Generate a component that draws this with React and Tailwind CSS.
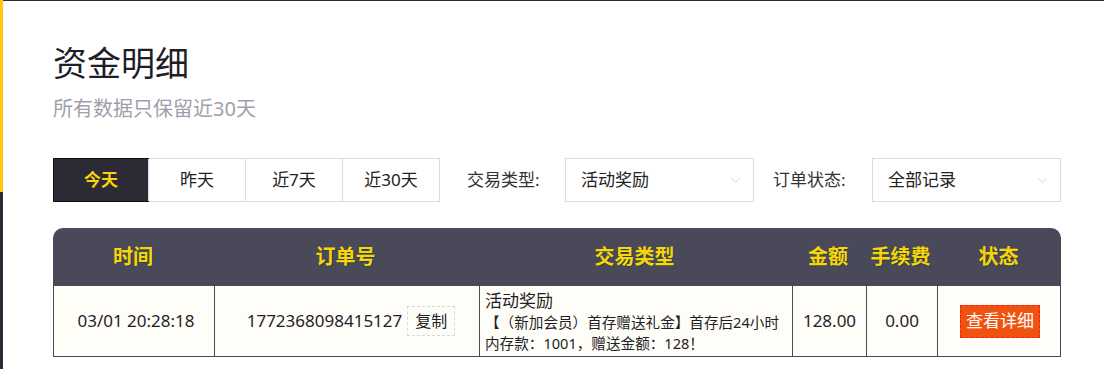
import { ChevronDown } from 'lucide-react';

const FONT = { fontFamily: '"Noto Sans", "Noto Sans CJK SC", sans-serif' };

const RANGES = ['今天', '昨天', '近7天', '近30天'];

const HEAD = ['时间', '订单号', '交易类型', '金额', '手续费', '状态'];

const Select = ({ value }) => (
  <div className="w-[189px] h-[44px] border border-[#dcdcdc] bg-white flex items-center justify-between pl-[15px] pr-[10px] text-[17px] text-[#222]">
    <span>{value}</span>
    <ChevronDown className="w-[15px] h-[15px] text-[#cfcfcf]" strokeWidth={1.5} />
  </div>
);

const App = () => {
  return (
    <div className="flex w-[1104px] h-[369px] bg-white overflow-hidden [text-spacing-trim:space-all]" style={FONT}>
      {/* sidebar edge */}
      <div className="w-[3px] flex flex-col shrink-0">
        <div className="h-[192px] bg-[#fcc814]" />
        <div className="flex-1 bg-[#2b2a35]" />
      </div>

      <div className="flex-1 flex flex-col border-t border-[#2b2a35] pl-[50px] pr-[44px]">
        <h1 className="mt-[38px] text-[34px] leading-[48px] text-[#1e1e28]">资金明细</h1>
        <p className="mt-[8px] text-[20px] leading-[28px] text-[#a0a0ac]">所有数据只保留近30天</p>

        {/* filters */}
        <div className="mt-[35px] flex items-center h-[44px]">
          <div className="flex border border-[#dcdcdc] h-[44px]">
            {RANGES.map((r, i) =>
              i === 0 ? (
                <div key={r} className="w-[96px] flex items-center justify-center bg-[#2b2a35] border border-[#111] -m-px h-[44px] text-[17px] font-bold text-[#fcd20a]">
                  {r}
                </div>
              ) : (
                <div key={r} className="w-[97px] flex items-center justify-center border-l border-[#dcdcdc] text-[17px] text-[#222]">
                  {r}
                </div>
              )
            )}
          </div>
          <span className="ml-[27px] w-[98px] text-[17px] text-[#333]">交易类型:</span>
          <Select value="活动奖励" />
          <span className="ml-[19px] w-[99px] text-[17px] text-[#333]">订单状态:</span>
          <Select value="全部记录" />
        </div>

        {/* table */}
        <div className="mt-[26px] w-[1008px]">
          <div className="grid grid-cols-[160px_265px_313px_74px_71px_125px] h-[58px] bg-[#4a4959] rounded-t-[10px]">
            {HEAD.map((h) => (
              <div key={h} className="flex items-center justify-center text-[20px] font-bold text-[#fcd20a] [text-shadow:1px_1px_0_#1d4a3a]">
                {h}
              </div>
            ))}
          </div>
          <div className="grid grid-cols-[160px_265px_313px_74px_71px_125px] h-[71px] bg-[#fffdf7] border-x border-b border-[#4a4959] text-[17px] text-[#1e1e28]">
            <div className="flex items-center justify-center pl-[4px]">03/01 20:28:18</div>
            <div className="flex items-center justify-center gap-[5px] border-l border-[#4a4959] pl-[8px]">
              <span>1772368098415127</span>
              <span className="px-[7px] h-[30px] flex items-center border border-dashed border-[#d8d8d8] text-[16px]">复制</span>
            </div>
            <div className="flex flex-col justify-center border-l border-[#4a4959] pl-[5px] pt-[2px] whitespace-nowrap">
              <span className="text-[17px] leading-[22px]">活动奖励</span>
              <span className="text-[14.6px] leading-[21px]">【（新加会员）首存赠送礼金】首存后24小时</span>
              <span className="text-[14.6px] leading-[21px]">内存款：1001，赠送金额：128！</span>
            </div>
            <div className="flex items-center justify-center border-l border-[#4a4959]">128.00</div>
            <div className="flex items-center justify-center border-l border-[#4a4959]">0.00</div>
            <div className="flex items-center justify-center border-l border-[#4a4959]">
              <span className="px-[5px] h-[33px] flex items-center bg-[#f05310] border border-dashed border-[#ff1a1a] text-white text-[17px]">
                查看详细
              </span>
            </div>
          </div>
        </div>
      </div>
    </div>
  );
};

export default App;
